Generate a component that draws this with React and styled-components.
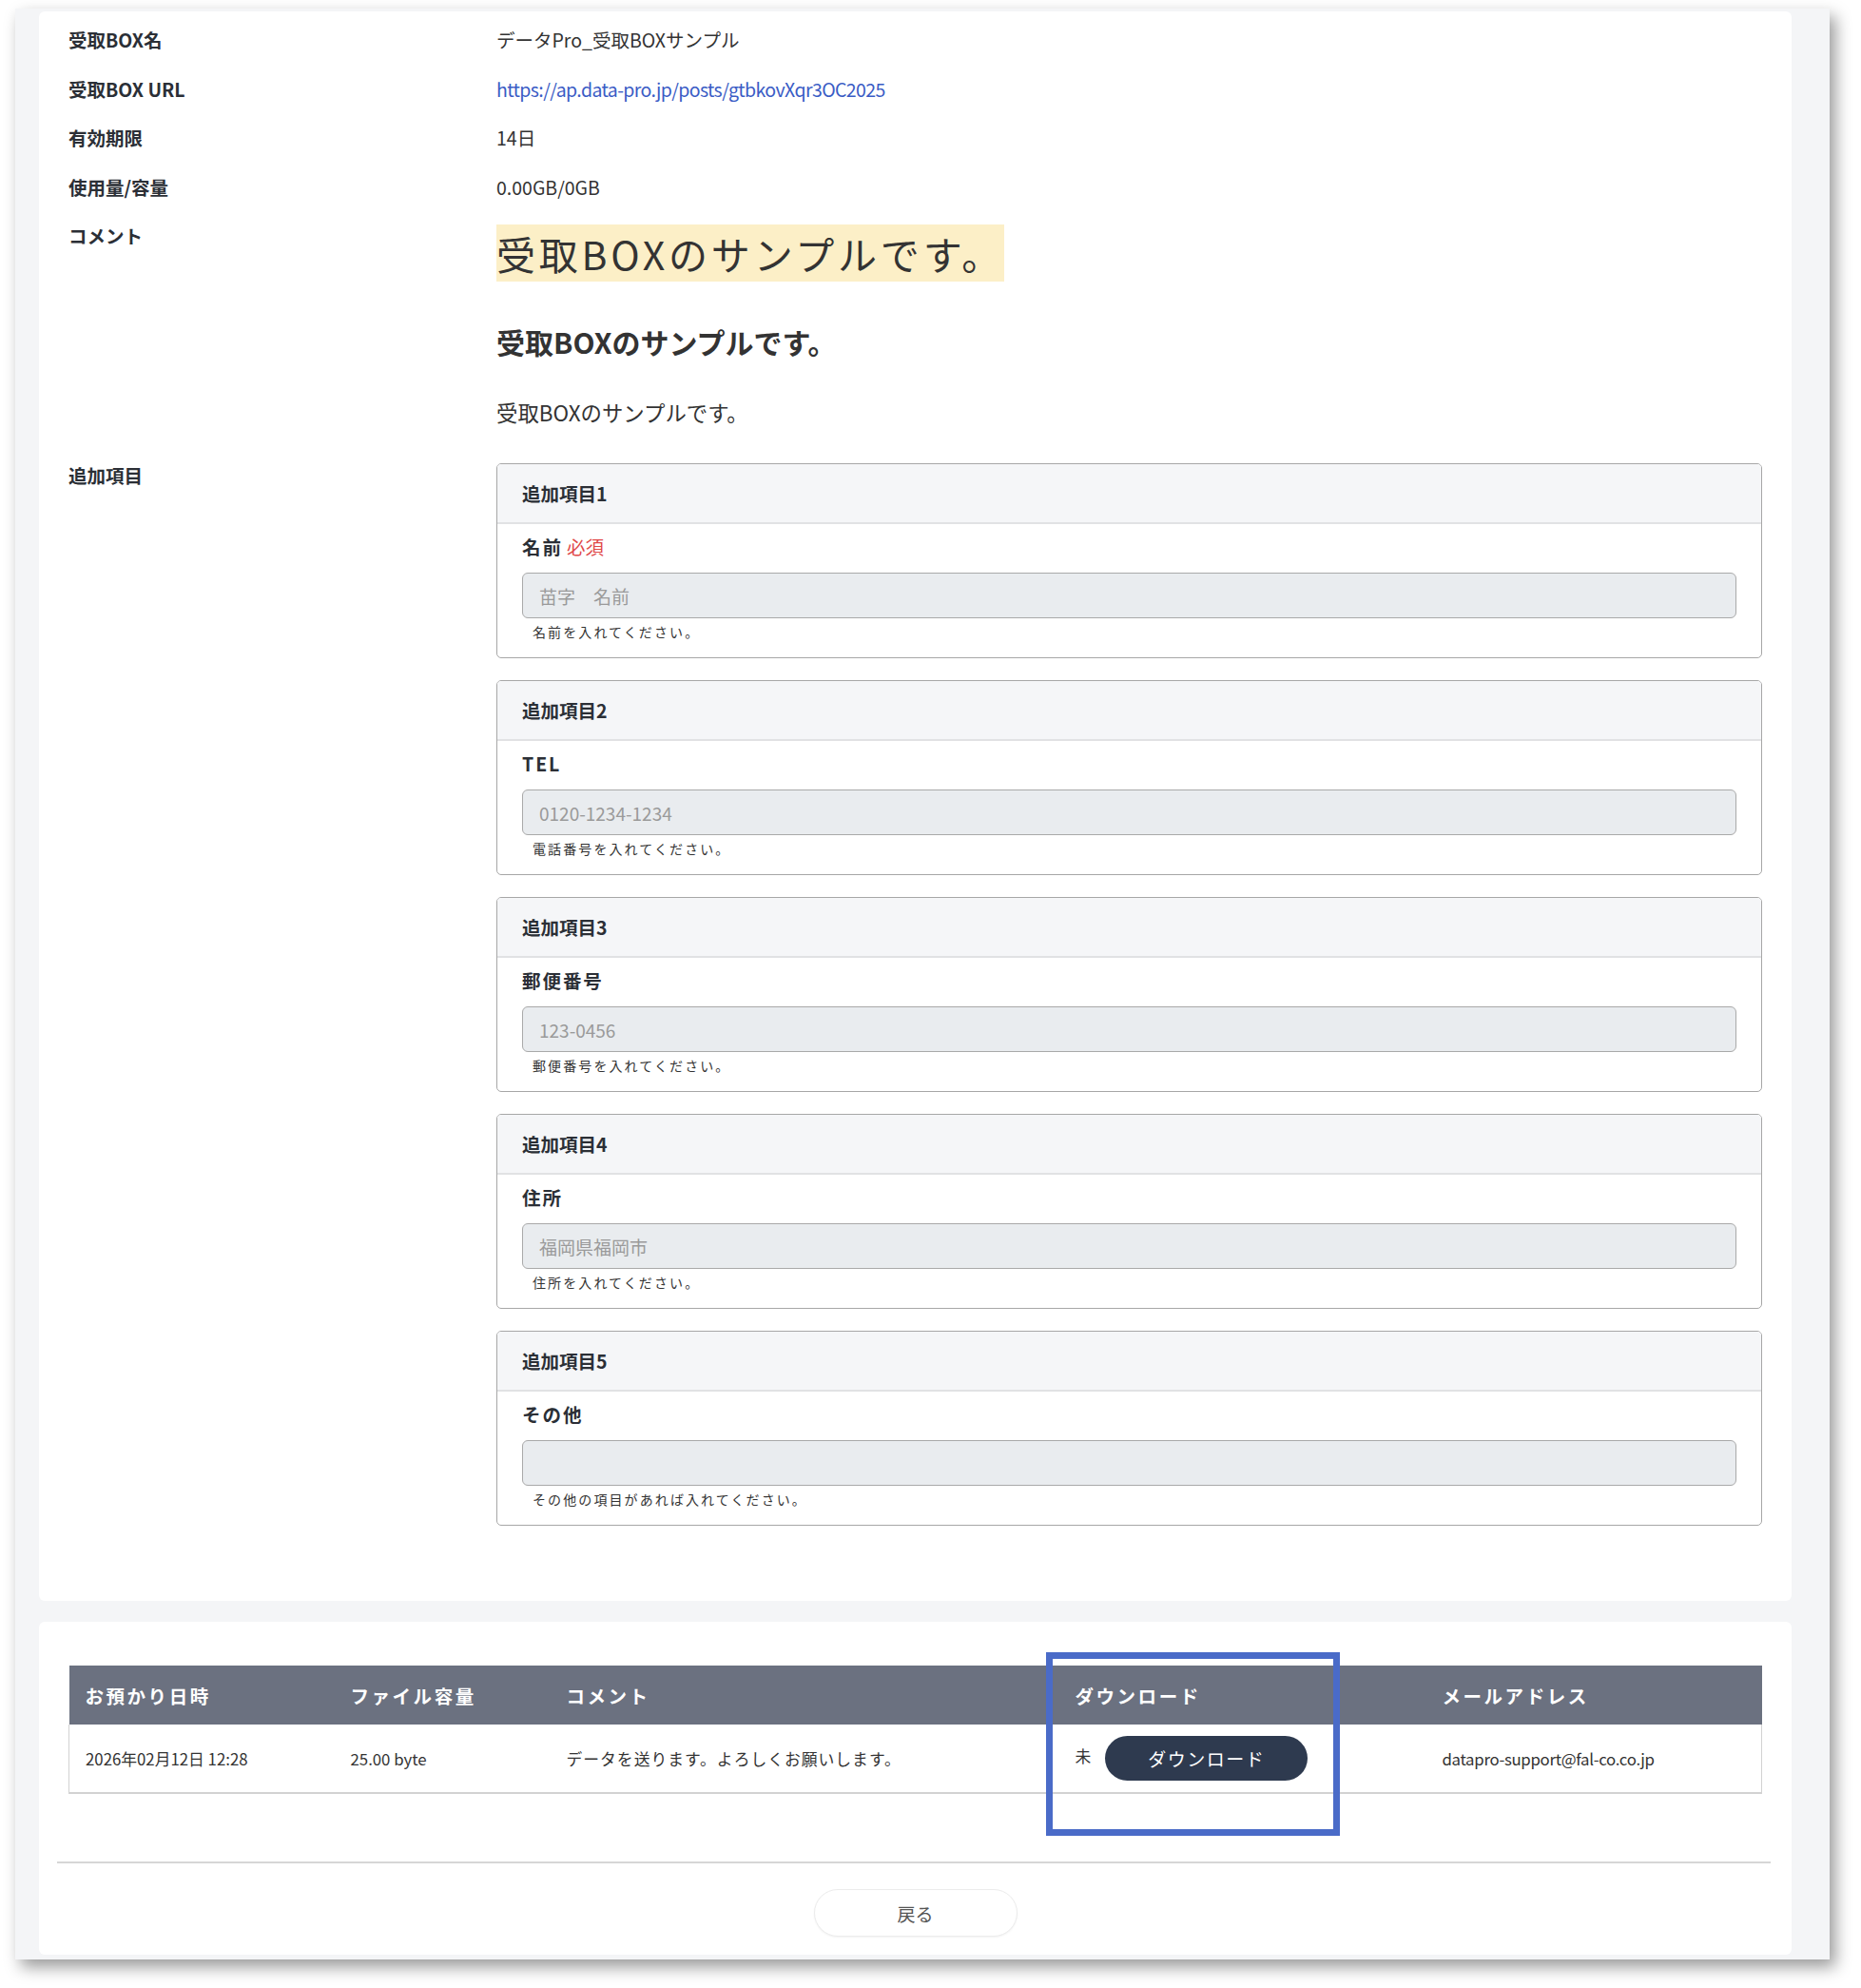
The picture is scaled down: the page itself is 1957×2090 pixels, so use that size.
import React from 'react'
import styled, { createGlobalStyle } from 'styled-components'

const GlobalStyle = createGlobalStyle`
  body {
    margin: 0;
    background: #fff;
    font-family: "Noto Sans CJK JP", "Noto Sans", sans-serif;
    color: #2b2f36;
  }
`

const Page = styled.div`
  width: 1957px;
  height: 2090px;
  overflow: hidden;
  box-sizing: border-box;
  padding: 9px 33px 0 16px;
`

const Window = styled.div`
  background: #f4f5f7;
  padding: 3px 40px 5px 25px;
  display: flex;
  flex-direction: column;
  gap: 22px;
  box-shadow: 6px 8px 16px rgba(0, 0, 0, 0.4);
`

const Card = styled.section`
  position: relative;
  background: #fff;
  border-radius: 6px;
  padding: ${p => p.$pad};
`

const Row = styled.div`
  display: grid;
  grid-template-columns: 450px 1fr;
  padding: 11px 0;
  font-size: 19.5px;
  line-height: 29.5px;
`

const Label = styled.div`
  font-weight: 700;
  color: #2b2f36;
`

const Value = styled.div`
  color: #333;
`

const Link = styled.a`
  color: #3a5cc5;
  text-decoration: none;
  letter-spacing: -0.6px;
`

const BigText = styled.p`
  margin: 4px 0 0;
  font-size: 41px;
  line-height: 1.45;
  letter-spacing: 3.8px;
`

const Highlight = styled.span`
  background: #fcefc7;
`

const Heading = styled.h2`
  margin: 41px 0 0;
  font-size: 30px;
  font-weight: 700;
  line-height: 1.5;
`

const Para = styled.p`
  margin: 35px 0 12px;
  font-size: 22.4px;
  line-height: 1.5;
`

const ItemList = styled.div`
  display: flex;
  flex-direction: column;
  gap: 23px;
  padding-top: 2px;
`

const ItemBox = styled.div`
  border: 1.5px solid #a7a7a7;
  border-radius: 5px;
  overflow: hidden;
`

const ItemHead = styled.div`
  height: 61px;
  display: flex;
  align-items: center;
  padding: 0 26px;
  background: #f5f6f8;
  border-bottom: 2px solid #e1e2e4;
  font-weight: 700;
`

const ItemBody = styled.div`
  padding: 8.5px 26px 16px;
`

const FieldLabel = styled.div`
  font-weight: 700;
  letter-spacing: 0.1em;
  margin-bottom: 13px;
`

const Required = styled.span`
  color: #e04848;
  font-weight: 400;
  letter-spacing: 0;
  margin-left: 4px;
`

const Input = styled.input`
  display: block;
  width: 100%;
  height: 48px;
  box-sizing: border-box;
  padding: 0 17px;
  background: #e9ecef;
  border: 1.5px solid #a9a9a9;
  border-radius: 6px;
  font-family: inherit;
  font-size: 19px;
  color: #333;
  &::placeholder {
    color: #9a9a9a;
  }
`

const Help = styled.div`
  margin: 3px 0 0 11px;
  font-size: 14px;
  line-height: 22px;
  letter-spacing: 2.1px;
  color: #333;
`

const Table = styled.table`
  width: calc(100% - 62px);
  margin: 0 31px;
  border-collapse: collapse;
  table-layout: fixed;
`

const Th = styled.th`
  height: 62px;
  padding: 0 17px;
  background: #6b7180;
  color: #fff;
  text-align: left;
  font-size: 19.5px;
  font-weight: 700;
  letter-spacing: 0.13em;
`

const Td = styled.td`
  height: 71px;
  padding: 0 17px;
  font-size: 16.8px;
  letter-spacing: ${p => p.$ls || 0};
  color: #333;
  border-bottom: 2px solid #d2d2d2;
  &:first-child {
    border-left: 1.5px solid #d2d2d2;
  }
  &:last-child {
    border-right: 1.5px solid #d2d2d2;
  }
`

const DlButton = styled.button`
  display: inline-flex;
  align-items: center;
  justify-content: center;
  width: 213px;
  height: 47px;
  margin-left: 15px;
  vertical-align: middle;
  border: none;
  border-radius: 24px;
  background: #2e3a4f;
  color: #fff;
  font-family: inherit;
  font-size: 19px;
  letter-spacing: 0.08em;
`

const Marker = styled.div`
  position: absolute;
  left: 1059px;
  top: 32px;
  width: 309px;
  height: 193px;
  box-sizing: border-box;
  border: 7px solid #4a6bc8;
  pointer-events: none;
`

const Rule = styled.hr`
  margin: 71px 22px 0 19px;
  border: none;
  border-top: 2.5px solid #d6d6d6;
`

const BackButton = styled.button`
  display: block;
  width: 214px;
  height: 50px;
  margin: 27px auto 0;
  background: #fff;
  border: 1.5px solid #ececec;
  border-radius: 25px;
  box-shadow: 0 1px 2px rgba(0, 0, 0, 0.05);
  font-family: inherit;
  font-size: 19px;
  color: #555;
`

const items = [
  { title: '追加項目1', label: '名前', required: true, placeholder: '苗字　名前', help: '名前を入れてください。' },
  { title: '追加項目2', label: 'TEL', placeholder: '0120-1234-1234', help: '電話番号を入れてください。' },
  { title: '追加項目3', label: '郵便番号', placeholder: '123-0456', help: '郵便番号を入れてください。' },
  { title: '追加項目4', label: '住所', placeholder: '福岡県福岡市', help: '住所を入れてください。' },
  { title: '追加項目5', label: 'その他', placeholder: '', help: 'その他の項目があれば入れてください。' },
]

export default function App() {
  return (
    <Page>
      <GlobalStyle />
      <Window>
        <Card $pad="4px 31px 68px">
          <Row>
            <Label>受取BOX名</Label>
            <Value>データPro_受取BOXサンプル</Value>
          </Row>
          <Row>
            <Label>受取BOX URL</Label>
            <Value><Link href="#">https://ap.data-pro.jp/posts/gtbkovXqr3OC2025</Link></Value>
          </Row>
          <Row>
            <Label>有効期限</Label>
            <Value>14日</Value>
          </Row>
          <Row>
            <Label>使用量/容量</Label>
            <Value>0.00GB/0GB</Value>
          </Row>
          <Row>
            <Label>コメント</Label>
            <Value>
              <BigText><Highlight>受取BOXのサンプルです。</Highlight></BigText>
              <Heading>受取BOXのサンプルです。</Heading>
              <Para>受取BOXのサンプルです。</Para>
            </Value>
          </Row>
          <Row>
            <Label>追加項目</Label>
            <ItemList>
              {items.map(it => (
                <ItemBox key={it.title}>
                  <ItemHead>{it.title}</ItemHead>
                  <ItemBody>
                    <FieldLabel>
                      {it.label}
                      {it.required && <Required>必須</Required>}
                    </FieldLabel>
                    <Input readOnly placeholder={it.placeholder} />
                    <Help>{it.help}</Help>
                  </ItemBody>
                </ItemBox>
              ))}
            </ItemList>
          </Row>
        </Card>

        <Card $pad="46px 0 19px">
          <Table>
            <colgroup>
              <col style={{ width: 279 }} />
              <col style={{ width: 227 }} />
              <col style={{ width: 535 }} />
              <col style={{ width: 386 }} />
              <col />
            </colgroup>
            <thead>
              <tr>
                <Th>お預かり日時</Th>
                <Th>ファイル容量</Th>
                <Th>コメント</Th>
                <Th>ダウンロード</Th>
                <Th>メールアドレス</Th>
              </tr>
            </thead>
            <tbody>
              <tr>
                <Td>2026年02月12日 12:28</Td>
                <Td>25.00 byte</Td>
                <Td $ls="1px">データを送ります。よろしくお願いします。</Td>
                <Td>未<DlButton>ダウンロード</DlButton></Td>
                <Td $ls="-0.3px">datapro-support@fal-co.co.jp</Td>
              </tr>
            </tbody>
          </Table>
          <Marker />
          <Rule />
          <BackButton>戻る</BackButton>
        </Card>
      </Window>
    </Page>
  )
}
